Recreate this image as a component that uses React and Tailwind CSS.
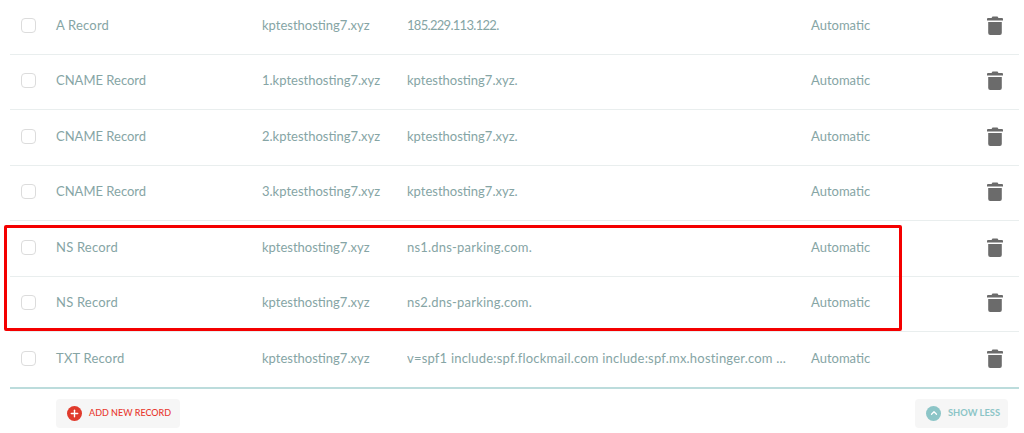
import { ChevronUp, Plus } from "lucide-react";

const records = [
  { type: "A Record", typeClass: "tracking-[0.2px]", name: "kptesthosting7.xyz", value: "185.229.113.122.", valueClass: "tracking-[-0.7px]" },
  { type: "CNAME Record", name: "1.kptesthosting7.xyz", value: "kptesthosting7.xyz." },
  { type: "CNAME Record", name: "2.kptesthosting7.xyz", value: "kptesthosting7.xyz." },
  { type: "CNAME Record", name: "3.kptesthosting7.xyz", value: "kptesthosting7.xyz." },
  { type: "NS Record", typeClass: "tracking-[0.2px]", name: "kptesthosting7.xyz", value: "ns1.dns-parking.com.", valueClass: "tracking-[0.2px]" },
  { type: "NS Record", typeClass: "tracking-[0.2px]", name: "kptesthosting7.xyz", value: "ns2.dns-parking.com.", valueClass: "tracking-[0.2px]" },
  { type: "TXT Record", typeClass: "tracking-[0.2px]", name: "kptesthosting7.xyz", value: "v=spf1 include:spf.flockmail.com include:spf.mx.hostinger.com ...", valueClass: "tracking-[0.2px]" },
];

function TrashIcon() {
  return (
    <svg width="16" height="19" viewBox="0 0 16 19" className="text-[#6b6b6b]" fill="currentColor">
      <path d="M5.5 0.5h5l1 1.5H15a1 1 0 0 1 1 1v1.5H0V3a1 1 0 0 1 1-1h3.5z" />
      <path d="M1.2 6h13.6v11a2 2 0 0 1-2 2H3.2a2 2 0 0 1-2-2z" />
    </svg>
  );
}

function RecordRow({ record }) {
  return (
    <div className="grid h-[55.5px] grid-cols-[35px_206px_145px_404px_1fr_16px] items-center border-b border-[#e9eeee] pb-[2px] pl-[11px] pr-[16px] text-[13px] text-[#86a5a5]">
      <span className="h-[15px] w-[15px] rounded-[4px] border border-[#dcdcdc] bg-white" />
      <span className={record.typeClass || ""}>{record.type}</span>
      <span>{record.name}</span>
      <span className={`truncate pr-[12px] ${record.valueClass || ""}`}>{record.value}</span>
      <span>Automatic</span>
      <TrashIcon />
    </div>
  );
}

export default function App() {
  return (
    <div className="relative h-[433px] w-[1024px] overflow-hidden bg-white font-['Lato',sans-serif]">
      <div className="ml-[10px] mr-[5px] -mt-[1px]">
        {records.map((record, index) => (
          <RecordRow key={index} record={record} />
        ))}
      </div>
      <div className="-mt-[1px] ml-[10px] mr-[5px] border-t-2 border-[#bcdcdc]" />

      <div className="mt-[10px] flex items-center justify-between pl-[56px] pr-[16px]">
        <button
          type="button"
          className="flex h-[29px] w-[124px] items-center gap-[7px] whitespace-nowrap rounded-[4px] bg-[#f6f6f6] pl-[11px] text-[9px] font-medium text-[#e8392f]"
        >
          <span className="flex h-[15px] w-[15px] items-center justify-center rounded-full bg-[#e03a2c]">
            <Plus className="h-[11px] w-[11px] text-white" strokeWidth={3} />
          </span>
          ADD NEW RECORD
        </button>
        <button
          type="button"
          className="flex h-[29px] w-[93px] items-center gap-[7px] whitespace-nowrap rounded-[4px] bg-[#f6f6f6] pl-[11px] text-[9.3px] font-bold text-[#8cc5c7]"
        >
          <span className="flex h-[15px] w-[15px] items-center justify-center rounded-full bg-[#8cc5c7]">
            <ChevronUp className="h-[10px] w-[10px] text-white" strokeWidth={3} />
          </span>
          SHOW LESS
        </button>
      </div>

      <div className="pointer-events-none absolute left-[4px] top-[225px] h-[106px] w-[898px] rounded-[2px] border-[3px] border-[#f40000]" />
    </div>
  );
}
